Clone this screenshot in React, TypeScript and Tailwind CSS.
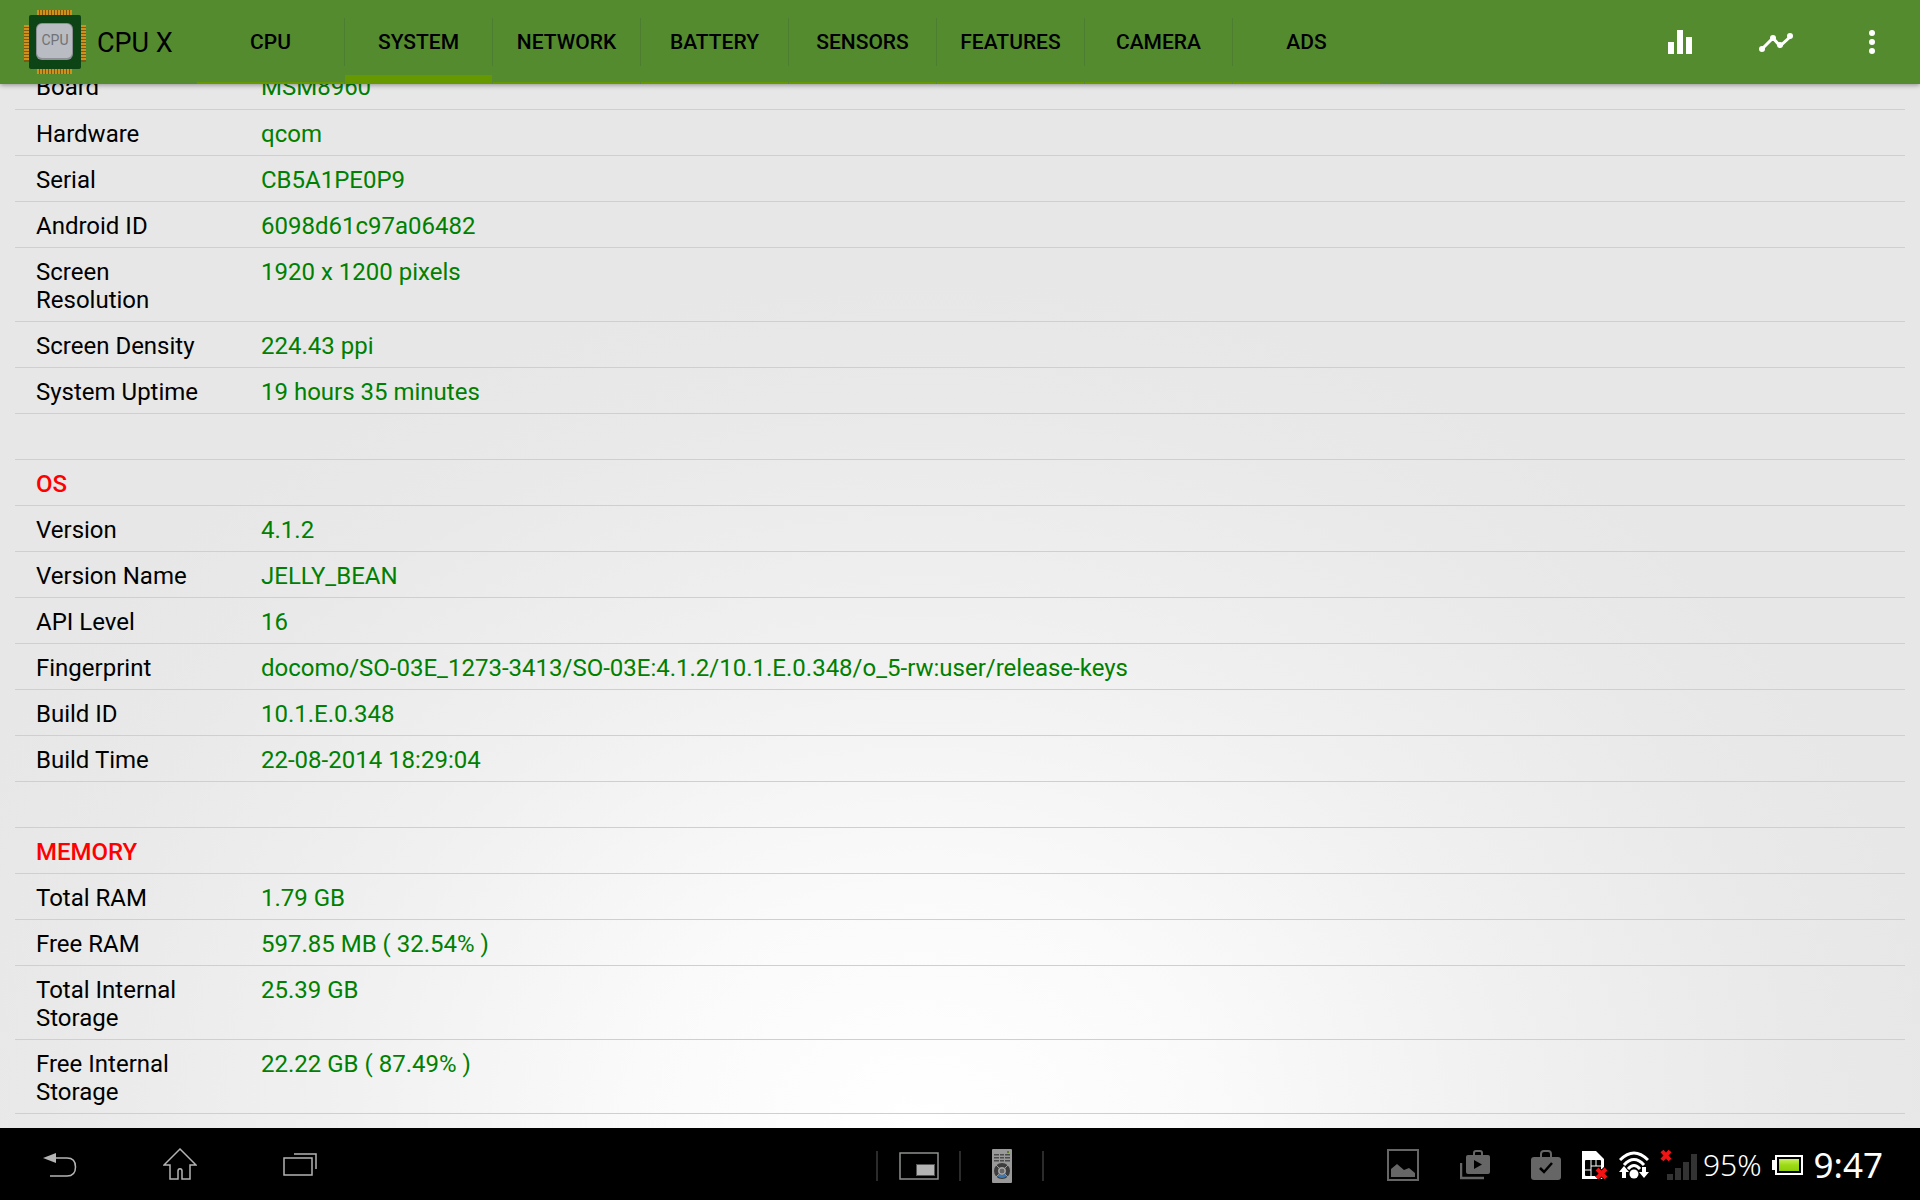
import React, { useState } from 'react';

type Row = { label: string; value?: string; heading?: boolean };

const tabs = ['CPU', 'SYSTEM', 'NETWORK', 'BATTERY', 'SENSORS', 'FEATURES', 'CAMERA', 'ADS'];

const rows: Row[] = [
  { label: 'Board', value: 'MSM8960' },
  { label: 'Hardware', value: 'qcom' },
  { label: 'Serial', value: 'CB5A1PE0P9' },
  { label: 'Android ID', value: '6098d61c97a06482' },
  { label: 'Screen Resolution', value: '1920 x 1200 pixels' },
  { label: 'Screen Density', value: '224.43 ppi' },
  { label: 'System Uptime', value: '19 hours 35 minutes' },
  { label: '' },
  { label: 'OS', heading: true },
  { label: 'Version', value: '4.1.2' },
  { label: 'Version Name', value: 'JELLY_BEAN' },
  { label: 'API Level', value: '16' },
  { label: 'Fingerprint', value: 'docomo/SO-03E_1273-3413/SO-03E:4.1.2/10.1.E.0.348/o_5-rw:user/release-keys' },
  { label: 'Build ID', value: '10.1.E.0.348' },
  { label: 'Build Time', value: '22-08-2014 18:29:04' },
  { label: '' },
  { label: 'MEMORY', heading: true },
  { label: 'Total RAM', value: '1.79 GB' },
  { label: 'Free RAM', value: '597.85 MB ( 32.54% )' },
  { label: 'Total Internal Storage', value: '25.39 GB' },
  { label: 'Free Internal Storage', value: '22.22 GB ( 87.49% )' },
];

const pins = Array.from({ length: 12 }, (_, i) => i * 3);

const ChipLogo: React.FC = () => (
  <svg width="62" height="64" viewBox="0 0 62 64" aria-hidden="true">
    <rect x="13" y="0" width="34" height="64" fill="#7d5a10" />
    <rect x="0" y="15" width="62" height="37" fill="#7d5a10" />
    {pins.map((p) => (
      <g key={p} fill="#cf901c">
        <rect x={13 + p} y="0" width="2" height="64" />
        <rect x="0" y={15 + p} width="62" height="2" />
      </g>
    ))}
    <rect x="5" y="5" width="52" height="54" rx="2" fill="#0c4415" />
    <rect x="12" y="13" width="37" height="37" rx="6" fill="#8d9196" />
    <rect x="13" y="14" width="35" height="34" rx="5" fill="#b9bcc2" />
    <text x="31" y="35" textAnchor="middle" fontFamily="Roboto, sans-serif" fontSize="14" fill="#707276">
      CPU
    </text>
  </svg>
);

const BarsIcon: React.FC = () => (
  <svg width="24" height="24" viewBox="0 0 24 24" fill="#fff" aria-hidden="true">
    <path d="M0 12h6v12H0zM9 0h6v24H9zM18 7h6v17h-6z" />
  </svg>
);

const TrendIcon: React.FC = () => (
  <svg width="34" height="20" viewBox="0 0 34 20" fill="#fff" aria-hidden="true">
    <path d="M3 17 14 6l7 8 10-9" fill="none" stroke="#fff" strokeWidth="3" />
    <circle cx="3" cy="17" r="3" />
    <circle cx="14" cy="6" r="3" />
    <circle cx="21" cy="13" r="3" />
    <circle cx="31" cy="4" r="3" />
  </svg>
);

const MoreIcon: React.FC = () => (
  <svg width="6" height="24" viewBox="0 0 6 24" fill="#fff" aria-hidden="true">
    <circle cx="3" cy="3" r="3" />
    <circle cx="3" cy="12" r="3" />
    <circle cx="3" cy="21" r="3" />
  </svg>
);

const BackIcon: React.FC = () => (
  <svg width="34" height="26" viewBox="0 0 34 26" fill="none" aria-hidden="true">
    <path d="M0 6 13 1v10z" fill="#b4b4b4" />
    <path d="M13 6h11c5 0 8.500 3 8.500 9s-3.500 9-8.500 9H7" stroke="#b4b4b4" strokeWidth="1.500" />
  </svg>
);

const HomeIcon: React.FC = () => (
  <svg width="34" height="32" viewBox="0 0 34 32" fill="none" stroke="#b4b4b4" strokeWidth="1.500" aria-hidden="true">
    <path d="M17 1 1 17h6v14h8v-8c0-3 4-3 4 0v8h8V17h6z" />
  </svg>
);

const RecentIcon: React.FC = () => (
  <svg width="34" height="24" viewBox="0 0 34 24" fill="none" stroke="#b4b4b4" strokeWidth="1.500" aria-hidden="true">
    <rect x="1" y="6" width="28" height="17" />
    <path d="M11 2h22v15" />
  </svg>
);

const SmallAppIcon: React.FC = () => (
  <svg width="40" height="28" viewBox="0 0 40 28" aria-hidden="true">
    <rect x="1" y="1" width="38" height="26" fill="none" stroke="#8f918f" strokeWidth="1.500" />
    <rect x="17" y="12" width="19" height="12" fill="#555" />
    <rect x="18" y="13" width="17" height="10" fill="#b4b4b4" />
  </svg>
);

const RemoteIcon: React.FC = () => (
  <svg width="20" height="34" viewBox="0 0 20 34" aria-hidden="true">
    <rect width="20" height="34" rx="1" fill="#999" />
    <rect x="15" y="2" width="2" height="2" fill="#587d1d" />
    {[5, 8, 11].map((y) => (
      <path key={y} d={`M2 ${y}h5v1.500h-5zM8 ${y}h4v1.500h-4zM13 ${y}h5v1.500h-5z`} fill="#4c4c4c" />
    ))}
    <circle cx="10" cy="22" r="6" fill="none" stroke="#3d3d3d" strokeWidth="4" />
    <path d="M5 27q5 4 10 0l-2-2q-3 2-6 0z" fill="#3c78b4" />
    <path d="m4 16 3 3M16 16l-3 3M4 28l3-3M16 28l-3-3" stroke="#999" />
    <circle cx="10" cy="22" r="3" fill="#666" stroke="#aaa" />
  </svg>
);

const ImageIcon: React.FC = () => (
  <svg width="32" height="32" viewBox="0 0 32 32" aria-hidden="true">
    <rect x="1" y="1" width="30" height="30" fill="none" stroke="#666" strokeWidth="2" />
    <path d="M4 28v-8l6-5 7 6 5-2 6 5v4z" fill="#666" />
  </svg>
);

const PlayMoviesIcon: React.FC = () => (
  <svg width="30" height="30" viewBox="0 0 30 30" aria-hidden="true">
    <path d="M1 13v15h23" fill="none" stroke="#666" strokeWidth="2.500" />
    <path d="M14 6V3q0-2 2-2h4q2 0 2 2v3" fill="none" stroke="#666" strokeWidth="2" />
    <rect x="6" y="5" width="24" height="19" rx="2" fill="#666" />
    <path d="M14 10v9l8-4.500z" fill="#000" />
  </svg>
);

const UpdatedIcon: React.FC = () => (
  <svg width="30" height="30" viewBox="0 0 30 30" aria-hidden="true">
    <path d="M10 7V4q0-3 3-3h4q3 0 3 3v3" fill="none" stroke="#666" strokeWidth="2" />
    <rect y="7" width="30" height="23" rx="3" fill="#666" />
    <path d="m9 18 4 4 8-9" fill="none" stroke="#000" strokeWidth="2.500" />
  </svg>
);

const SimIcon: React.FC = () => (
  <svg width="26" height="28" viewBox="0 0 26 28" aria-hidden="true">
    <path d="M0 0h14l8 8v20H0z" fill="#fff" />
    <rect x="3" y="9" width="16" height="16" rx="1" fill="#000" />
    <path d="M9 9v6h5V9M3 19h6v6M14 15h5M9 15v4" fill="none" stroke="#fff" strokeWidth="1" />
    <path d="m15 18 9 9m0-9-9 9" stroke="#000" strokeWidth="6" />
    <path d="m15 18 9 9m0-9-9 9" stroke="#f01414" strokeWidth="4" />
  </svg>
);

const WifiIcon: React.FC = () => (
  <svg width="30" height="28" viewBox="0 0 30 28" aria-hidden="true">
    <g fill="none" stroke="#fff" strokeWidth="3">
      <path d="M1 9Q15-5 29 9" />
      <path d="M5 14q10-11 20 0" />
      <path d="M9 18q6-7 12 0" />
    </g>
    <circle cx="15" cy="23" r="4.500" fill="#fff" />
    <path d="m5 15 5 6H7v6H3v-6H0zM25 27l-5-6h3v-5h4v5h3z" fill="#fff" />
  </svg>
);

const SignalIcon: React.FC = () => (
  <svg width="37" height="32" viewBox="0 0 37 32" aria-hidden="true">
    <path d="M7 25h6v6H7zM15 19h6v12h-6zM23 13h6v18h-6zM31 5h6v26h-6z" fill="#333" />
    <path d="m2 2 8 9m0-9-8 9" stroke="#f01414" strokeWidth="4" />
  </svg>
);

const BatteryIcon: React.FC = () => (
  <svg width="31" height="22" viewBox="0 0 31 22" aria-hidden="true">
    <defs>
      <linearGradient id="charge" x1="0" y1="0" x2="0" y2="1">
        <stop offset="0" stopColor="#c9ee62" />
        <stop offset="0.5" stopColor="#9cdb14" />
        <stop offset="1" stopColor="#8ccc0c" />
      </linearGradient>
    </defs>
    <rect x="4" y="2" width="26" height="18" fill="none" stroke="#fff" strokeWidth="2" />
    <rect x="0" y="6" width="4" height="10" fill="#fff" />
    <rect x="7" y="5" width="20" height="12" fill="url(#charge)" />
  </svg>
);

const App: React.FC = () => {
  const [activeTab, setActiveTab] = useState('SYSTEM');

  return (
    <div className="flex h-screen flex-col overflow-hidden bg-[#e7e7e7] font-[Roboto,sans-serif] text-black">
      {/* Action bar */}
      <header className="relative z-10 flex h-[84px] shrink-0 items-center bg-[#558b2f] shadow-[0_1px_5px_rgba(0,0,0,0.4)]">
        <div className="flex w-[197px] shrink-0 items-center gap-[11px] pl-6">
          <ChipLogo />
          <h1 className="pt-0.5 text-[27px] whitespace-nowrap">CPU X</h1>
        </div>
        <nav className="flex h-full">
          {tabs.map((tab, i) => (
            <React.Fragment key={tab}>
              {i > 0 && <span className="mt-[18px] h-12 w-px bg-[#4c7d31]" />}
              <button
                type="button"
                onClick={() => setActiveTab(tab)}
                className={`h-full w-[147px] border-[#669900] text-[21px] font-medium ${
                  tab === activeTab ? 'border-b-9 pt-[11px]' : 'border-b-2 pt-1'
                }`}
              >
                {tab}
              </button>
            </React.Fragment>
          ))}
        </nav>
        <div className="ml-auto flex h-full">
          <button type="button" aria-label="Statistics" className="flex w-24 items-center justify-center">
            <BarsIcon />
          </button>
          <button type="button" aria-label="Charts" className="flex w-24 items-center justify-center">
            <TrendIcon />
          </button>
          <button type="button" aria-label="More options" className="flex w-24 items-center justify-center">
            <MoreIcon />
          </button>
        </div>
      </header>

      {/* System info, scrolled part of the way into the Board row */}
      <main className="min-h-0 flex-1 overflow-hidden bg-[radial-gradient(ellipse_54%_82%_at_48%_100%,#ffffff_0%,#fafafa_28%,#f0f0f0_58%,#e9e9e9_85%,#e7e7e7_100%)] px-[15px]">
        <table className="-mt-[21px] w-full border-collapse text-2xl leading-7">
          <tbody>
            {rows.map((row, i) => (
              <tr key={i} className="border-b border-[#cfcfcf] align-top">
                <th
                  scope="row"
                  className={`h-[46px] w-[246px] pt-2.5 pr-12 pb-[7px] pl-[21px] text-left ${
                    row.heading ? 'font-medium text-[#ff0000]' : 'font-normal'
                  }`}
                >
                  {row.label}
                </th>
                <td className="pt-2.5 pb-[7px] text-[#008000]">{row.value}</td>
              </tr>
            ))}
          </tbody>
        </table>
      </main>

      {/* System bar */}
      <footer className="flex h-[72px] shrink-0 items-center justify-between bg-black text-white">
        <div className="flex flex-1">
          <button type="button" aria-label="Back" className="flex w-[120px] justify-center pt-1">
            <BackIcon />
          </button>
          <button type="button" aria-label="Home" className="flex w-[120px] justify-center">
            <HomeIcon />
          </button>
          <button type="button" aria-label="Recent apps" className="flex w-[120px] justify-center pt-1">
            <RecentIcon />
          </button>
        </div>
        <div className="flex items-center pt-1">
          <span className="h-[30px] w-0.5 bg-[#2b2b2b]" />
          <button type="button" aria-label="Small apps" className="flex w-[81px] justify-center">
            <SmallAppIcon />
          </button>
          <span className="h-[30px] w-0.5 bg-[#2b2b2b]" />
          <button type="button" aria-label="Remote control" className="flex w-[81px] justify-center">
            <RemoteIcon />
          </button>
          <span className="h-[30px] w-0.5 bg-[#2b2b2b]" />
        </div>
        <div className="flex flex-1 items-center justify-end pt-0.5 font-['Noto_Sans',sans-serif]">
          <div className="flex items-center gap-[41px] pr-[21px]">
            <ImageIcon />
            <PlayMoviesIcon />
            <UpdatedIcon />
          </div>
          <div className="flex items-center gap-[11px]">
            <SimIcon />
            <WifiIcon />
            <SignalIcon />
          </div>
          <span className="pl-1.5 text-3xl font-light">95%</span>
          <span className="pr-[11px] pl-2.5">
            <BatteryIcon />
          </span>
          <time className="pr-[37px] text-[35px]">9:47</time>
        </div>
      </footer>
    </div>
  );
};

export default App;
